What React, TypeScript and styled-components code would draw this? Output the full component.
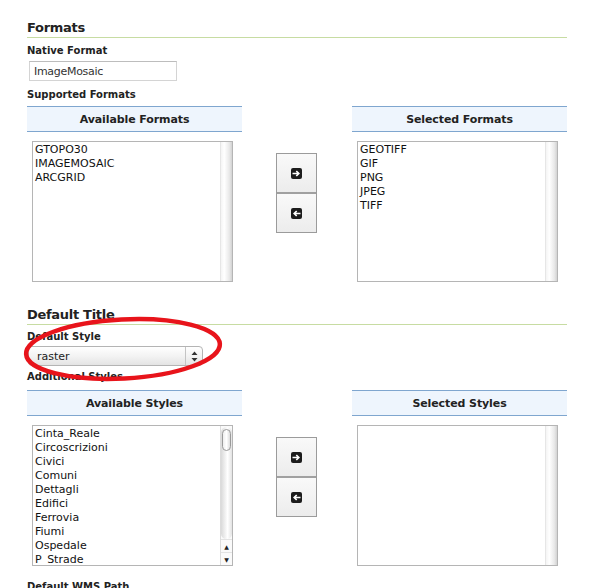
import React from "react";
import styled, { createGlobalStyle } from "styled-components";

const GlobalStyle = createGlobalStyle`
  html, body { margin: 0; padding: 0; background: #fff; }
  body { font-family: "DejaVu Sans", Verdana, sans-serif; color: #222; }
`;

const Page = styled.div`
  position: relative;
  width: 605px;
  height: 588px;
  overflow: hidden;
  box-sizing: border-box;
  padding: 20px 38px 0 27px;
  display: flex;
  flex-direction: column;
  & > * {
    flex-shrink: 0;
  }
`;

const SectionTitle = styled.h2<{ $mt?: number }>`
  margin: ${(p) => p.$mt ?? 0}px 0 0 0;
  font-size: 13px;
  line-height: 16px;
  font-weight: bold;
  letter-spacing: -0.3px;
  color: #222;
  padding-bottom: 1px;
  border-bottom: 1px solid #c7dca2;
`;

const FieldLabel = styled.div<{ $mt?: number }>`
  margin-top: ${(p) => p.$mt ?? 5}px;
  font-size: 10px;
  line-height: 14px;
  font-weight: bold;
  color: #222;
`;

const TextInput = styled.input`
  margin: 3px 0 0 2px;
  width: 148px;
  height: 20px;
  box-sizing: border-box;
  border: 1px solid #d4d4d4;
  border-top-color: #bdbdbd;
  padding: 0 4px;
  font-family: "DejaVu Sans", Verdana, sans-serif;
  font-size: 11px;
  letter-spacing: -0.3px;
  color: #333;
  background: #fff;
  outline: none;
`;

const SelectBox = styled.div`
  margin: 2px 0 0 1px;
  width: 175px;
  height: 20px;
  box-sizing: border-box;
  border: 1px solid #b4b4b4;
  border-radius: 4px;
  background: linear-gradient(#ffffff, #f3f3f3 50%, #e4e4e4);
  display: flex;
  align-items: center;
  font-size: 11px;
  color: #222;
`;

const SelectText = styled.span`
  flex: 1;
  padding-left: 8px;
`;

const SelectArrows = styled.span`
  width: 16px;
  height: 100%;
  border-left: 1px solid #c4c4c4;
  display: flex;
  align-items: center;
  justify-content: center;
`;

const DualRow = styled.div<{ $mt?: number }>`
  margin-top: ${(p) => p.$mt ?? 4}px;
  display: flex;
  align-items: flex-start;
`;

const ListColumn = styled.div`
  width: 215px;
  display: flex;
  flex-direction: column;
`;

const ColumnHeader = styled.div`
  height: 24px;
  border-top: 1px solid #7fa6cf;
  border-bottom: 1px solid #7fa6cf;
  background: #eef5fd;
  display: flex;
  align-items: center;
  justify-content: center;
  font-size: 11px;
  letter-spacing: -0.1px;
  font-weight: bold;
  color: #222;
`;

const ListBox = styled.div`
  margin: 9px 0 0 5px;
  width: 201px;
  height: 141px;
  box-sizing: border-box;
  border: 1px solid #b5b5b5;
  display: flex;
  background: #fff;
`;

const ListItems = styled.ul`
  flex: 1;
  margin: 0;
  padding: 1px 2px 0 2px;
  list-style: none;
  overflow: hidden;
`;

const ListItem = styled.li`
  font-size: 11px;
  line-height: 14px;
  color: #111;
  white-space: nowrap;
`;

const ScrollTrack = styled.div`
  width: 11px;
  background: linear-gradient(to right, #f4f4f4, #ffffff 30%, #e9e9e9 75%, #d2d2d2);
  border-left: 1px solid #e6e6e6;
`;

const AquaScroll = styled.div`
  width: 11px;
  border-left: 1px solid #dcdcdc;
  display: flex;
  flex-direction: column;
  background: #fafafa;
`;

const AquaTrack = styled.div`
  flex: 1;
  margin: 1px 0 0 0;
  border-radius: 6px;
  background: linear-gradient(to right, #d9d9d9, #f2f2f2 40%, #ffffff 60%, #e2e2e2);
  padding-top: 2px;
  display: flex;
  flex-direction: column;
  align-items: center;
`;

const AquaThumb = styled.div`
  width: 9px;
  height: 22px;
  box-sizing: border-box;
  border: 1px solid #9a9a9a;
  border-radius: 5px;
  background: linear-gradient(to right, #eeeeee, #ffffff 50%, #dcdcdc);
`;

const AquaArrow = styled.div`
  height: 12px;
  display: flex;
  align-items: center;
  justify-content: center;
  font-size: 6px;
  color: #222;
  border-top: 1px solid #e3e3e3;
`;

const MoveButtons = styled.div`
  margin: 47px 35px 0 34px;
  width: 41px;
  box-sizing: border-box;
  border: 1px solid #9b9b9b;
  display: flex;
  flex-direction: column;
`;

const MoveButton = styled.button`
  height: 38px;
  border: none;
  padding: 0;
  background: linear-gradient(#f9f9f9, #ececec);
  display: flex;
  align-items: center;
  justify-content: center;
  & + & {
    border-top: 2px solid #a0a0a0;
    height: 40px;
  }
`;

const Ellipse = styled.svg`
  position: absolute;
  left: 18px;
  top: 312px;
  pointer-events: none;
`;

const ArrowIcon = ({ dir }: { dir: "right" | "left" }) => (
  <svg width="11" height="11" viewBox="0 0 11 11">
    <rect x="0" y="0" width="11" height="11" rx="2" fill="#1c1c1c" />
    {dir === "right" ? (
      <path d="M1.5 5.5 H7.5 M5.3 3 L7.8 5.5 L5.3 8" stroke="#fff" strokeWidth="1.7" fill="none" />
    ) : (
      <path d="M9.5 5.5 H3.5 M5.7 3 L3.2 5.5 L5.7 8" stroke="#fff" strokeWidth="1.7" fill="none" />
    )}
  </svg>
);

type DualListProps = {
  leftTitle: string;
  rightTitle: string;
  left: string[];
  right: string[];
  aqua?: boolean;
  mt?: number;
};

const DualList = ({ leftTitle, rightTitle, left, right, aqua, mt }: DualListProps) => (
  <DualRow $mt={mt}>
    <ListColumn>
      <ColumnHeader>{leftTitle}</ColumnHeader>
      <ListBox>
        <ListItems>
          {left.map((s) => (
            <ListItem key={s}>{s}</ListItem>
          ))}
        </ListItems>
        {aqua ? (
          <AquaScroll>
            <AquaTrack>
              <AquaThumb />
            </AquaTrack>
            <AquaArrow>▲</AquaArrow>
            <AquaArrow>▼</AquaArrow>
          </AquaScroll>
        ) : (
          <ScrollTrack />
        )}
      </ListBox>
    </ListColumn>
    <MoveButtons>
      <MoveButton aria-label="add">
        <ArrowIcon dir="right" />
      </MoveButton>
      <MoveButton aria-label="remove">
        <ArrowIcon dir="left" />
      </MoveButton>
    </MoveButtons>
    <ListColumn>
      <ColumnHeader>{rightTitle}</ColumnHeader>
      <ListBox>
        <ListItems>
          {right.map((s) => (
            <ListItem key={s}>{s}</ListItem>
          ))}
        </ListItems>
        <ScrollTrack />
      </ListBox>
    </ListColumn>
  </DualRow>
);

export default function App() {
  return (
    <>
      <GlobalStyle />
      <Page>
        <SectionTitle>Formats</SectionTitle>
        <FieldLabel $mt={6}>Native Format</FieldLabel>
        <TextInput value="ImageMosaic" readOnly />
        <FieldLabel $mt={7}>Supported Formats</FieldLabel>
        <DualList
          leftTitle="Available Formats"
          rightTitle="Selected Formats"
          left={["GTOPO30", "IMAGEMOSAIC", "ARCGRID"]}
          right={["GEOTIFF", "GIF", "PNG", "JPEG", "TIFF"]}
        />
        <SectionTitle $mt={25}>Default Title</SectionTitle>
        <FieldLabel $mt={5}>Default Style</FieldLabel>
        <SelectBox>
          <SelectText>raster</SelectText>
          <SelectArrows>
            <svg width="7" height="11" viewBox="0 0 7 11">
              <path d="M3.5 0.5 L6.5 4 H0.5 Z M3.5 10.5 L6.5 7 H0.5 Z" fill="#333" />
            </svg>
          </SelectArrows>
        </SelectBox>
        <FieldLabel $mt={4}>Additional Styles</FieldLabel>
        <DualList
          mt={6}
          aqua
          leftTitle="Available Styles"
          rightTitle="Selected Styles"
          left={[
            "Cinta_Reale",
            "Circoscrizioni",
            "Civici",
            "Comuni",
            "Dettagli",
            "Edifici",
            "Ferrovia",
            "Fiumi",
            "Ospedale",
            "P_Strade",
          ]}
          right={[]}
        />
        <FieldLabel $mt={14}>Default WMS Path</FieldLabel>
        <Ellipse width="212" height="76" viewBox="0 0 212 76">
          <ellipse
            cx="105"
            cy="37"
            rx="97"
            ry="29.5"
            transform="rotate(-3 105 37)"
            fill="none"
            stroke="#e8141b"
            strokeWidth="4.5"
          />
        </Ellipse>
      </Page>
    </>
  );
}
